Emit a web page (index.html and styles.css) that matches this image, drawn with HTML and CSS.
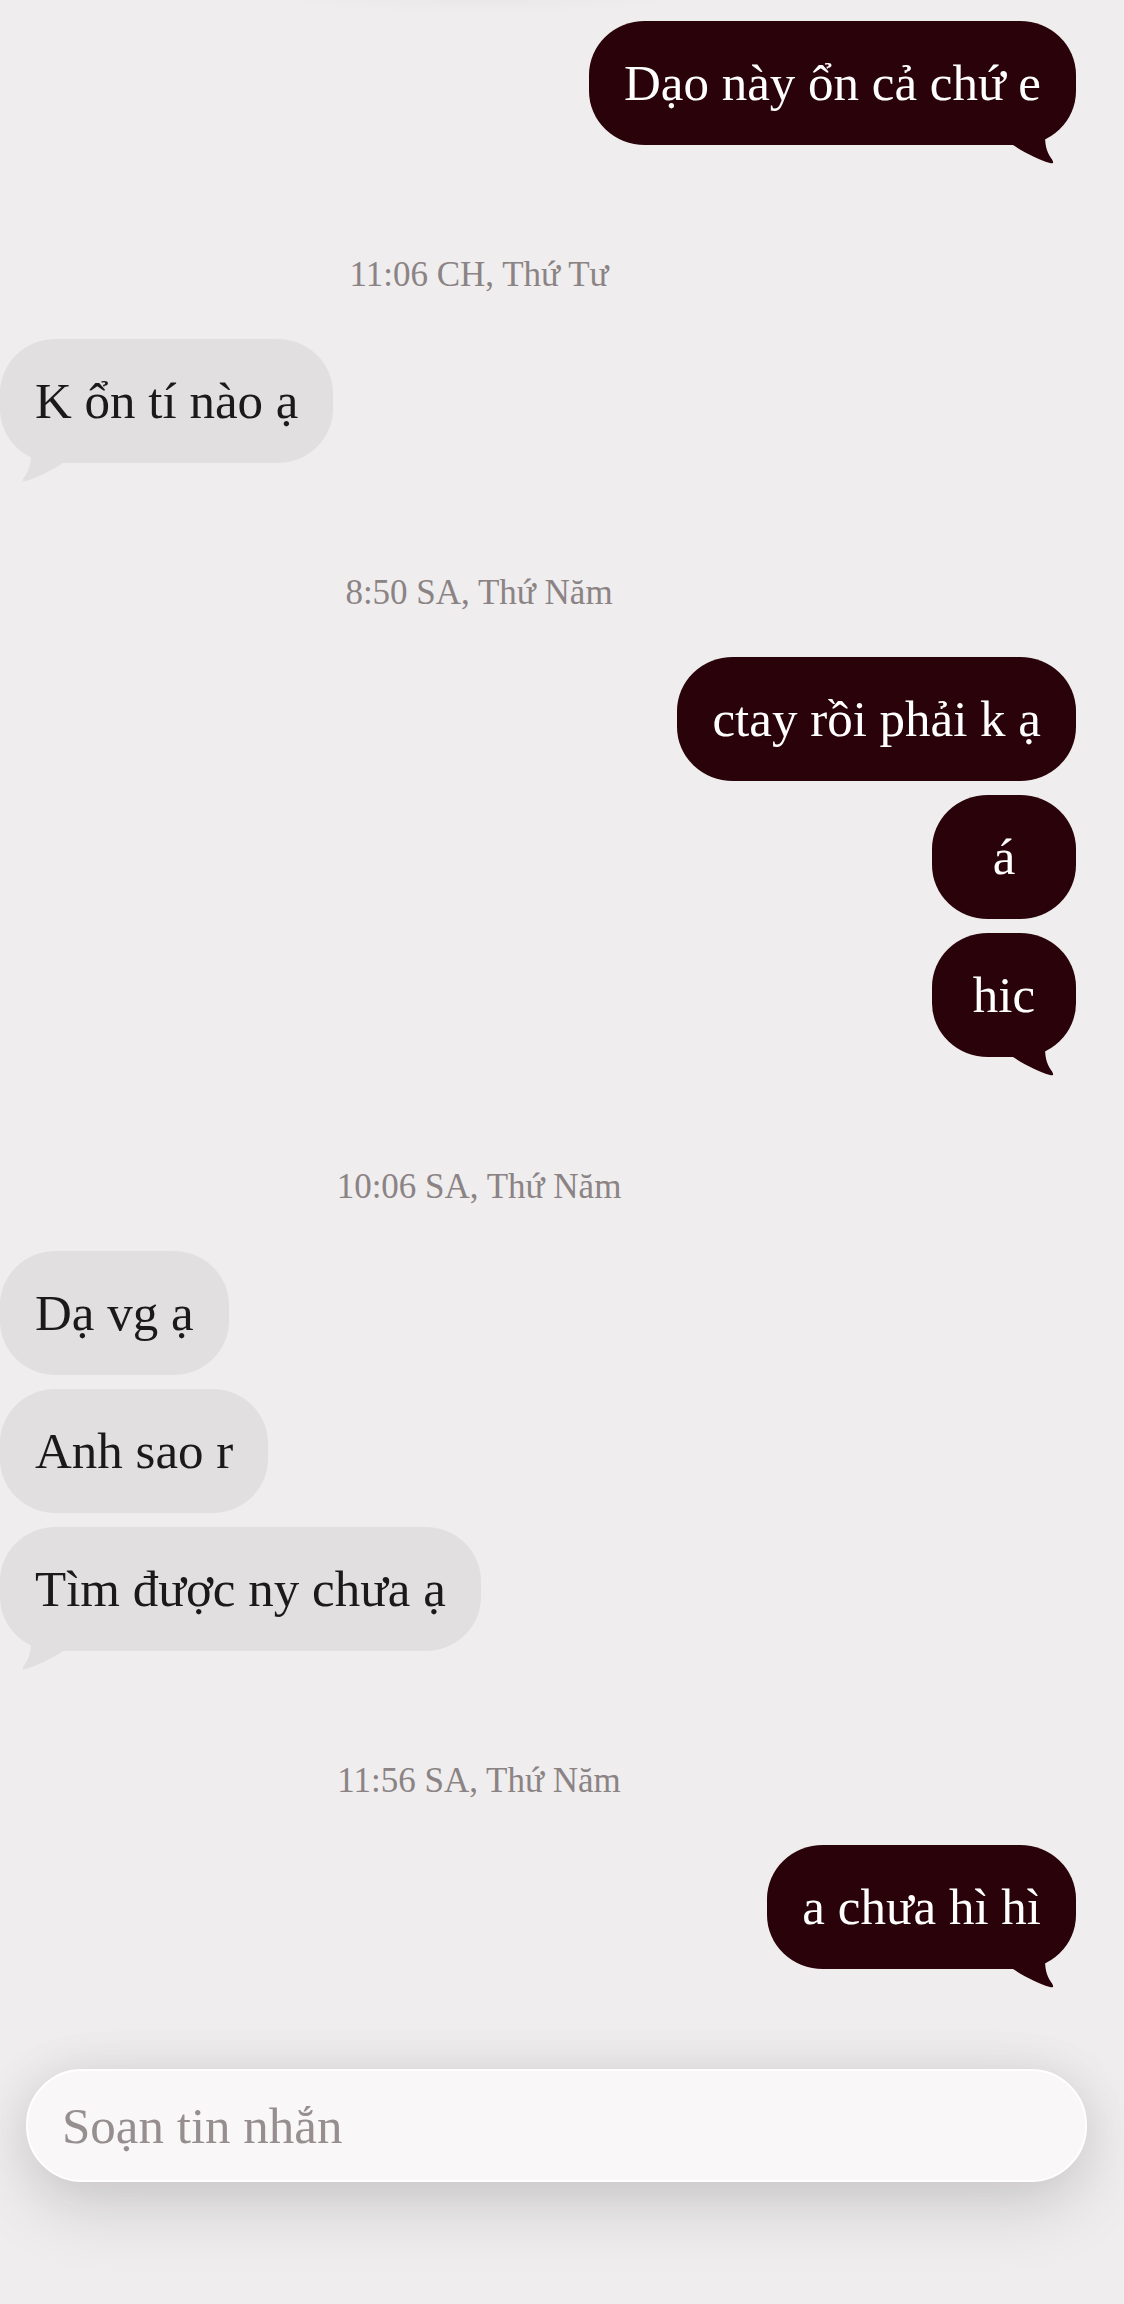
FILE: index.html
```html
<!DOCTYPE html>
<html lang="vi">
    <head>
        <meta charset="UTF-8" />
        <meta name="viewport" content="width=device-width, initial-scale=1.0" />
        <title>Tin nhắn</title>
        <link rel="stylesheet" href="styles.css">
    </head>
    <body>
        <div class="page">
            <div class="chat">
                <div class="group sent">
                    <div class="bubble">Dạo này ổn cả chứ e
                        <svg class="tail" viewBox="0 0 66 30"><path d="M0 0 H35 C35 8 36 16 41 23 C44 27 44 29 40 28 C30 25 15 18 3 10 Z"/></svg>
                    </div>
                </div>

                <div class="stamp">11:06 CH, Thứ Tư</div>
                <div class="group received">
                    <div class="bubble">K ổn tí nào ạ
                        <svg class="tail" viewBox="0 0 66 30"><path d="M0 0 H35 C35 8 36 16 41 23 C44 27 44 29 40 28 C30 25 15 18 3 10 Z"/></svg>
                    </div>
                </div>

                <div class="stamp">8:50 SA, Thứ Năm</div>
                <div class="group sent">
                    <div class="bubble">ctay rồi phải k ạ</div>
                    <div class="bubble">á</div>
                    <div class="bubble">hic
                        <svg class="tail" viewBox="0 0 66 30"><path d="M0 0 H35 C35 8 36 16 41 23 C44 27 44 29 40 28 C30 25 15 18 3 10 Z"/></svg>
                    </div>
                </div>

                <div class="stamp">10:06 SA, Thứ Năm</div>
                <div class="group received">
                    <div class="bubble">Dạ vg ạ</div>
                    <div class="bubble">Anh sao r</div>
                    <div class="bubble">Tìm được ny chưa ạ
                        <svg class="tail" viewBox="0 0 66 30"><path d="M0 0 H35 C35 8 36 16 41 23 C44 27 44 29 40 28 C30 25 15 18 3 10 Z"/></svg>
                    </div>
                </div>

                <div class="stamp">11:56 SA, Thứ Năm</div>
                <div class="group sent">
                    <div class="bubble">a chưa hì hì
                        <svg class="tail" viewBox="0 0 66 30"><path d="M0 0 H35 C35 8 36 16 41 23 C44 27 44 29 40 28 C30 25 15 18 3 10 Z"/></svg>
                    </div>
                </div>
            </div>

            <div class="composer">
                <input type="text" class="message-input" placeholder="Soạn tin nhắn" />
            </div>
        </div>
    </body>
</html>
```

FILE: styles.css
```css
body {
    margin: 0;
    font-family: "Liberation Serif", "Times New Roman", serif;
    background-color: #efedee;
}

.page {
    height: 2304px;
    overflow: hidden;
    background:
        radial-gradient(ellipse 200px 12px at 480px 0, rgba(0, 0, 0, 0.025), transparent),
        #efedee;
}

.chat {
    padding-top: 21px;
}

.group {
    display: flex;
    flex-direction: column;
    gap: 14px;
}

.group.sent {
    align-items: flex-end;
    padding-right: 48px;
}

.group.received {
    align-items: flex-start;
}

.bubble {
    position: relative;
    min-width: 144px;
    box-sizing: border-box;
    padding: 32px 35px;
    font-size: 51px;
    line-height: 60px;
    text-align: center;
    border-radius: 56px / 54px;
    white-space: nowrap;
}

.sent .bubble {
    background-color: #290309;
    color: #ffffff;
}

.received .bubble {
    background-color: #e1dfe0;
    color: #1b191a;
}

.tail {
    position: absolute;
    bottom: -20px;
    width: 66px;
    height: 30px;
}

.sent .tail {
    right: 0;
    fill: #290309;
}

.received .tail {
    left: 0;
    fill: #e1dfe0;
    transform: scaleX(-1);
}

.stamp {
    margin: 110px 0 44px;
    padding-right: 166px;
    font-size: 35px;
    line-height: 40px;
    text-align: center;
    color: #8b8384;
}

.composer {
    margin-top: 100px;
    padding: 0 37px 0 26px;
}

.message-input {
    display: block;
    width: 100%;
    height: 113px;
    box-sizing: border-box;
    padding: 0 34px;
    border: 2px solid #ffffff;
    border-radius: 56px;
    background-color: #f9f7f8;
    font-family: "Liberation Serif", "Times New Roman", serif;
    font-size: 51px;
    line-height: 60px;
    color: #1b191a;
    outline: none;
    box-shadow: 0 26px 70px rgba(0, 0, 0, 0.13), 0 0 50px rgba(0, 0, 0, 0.07);
}

.message-input::placeholder {
    color: #968e8f;
}
```
